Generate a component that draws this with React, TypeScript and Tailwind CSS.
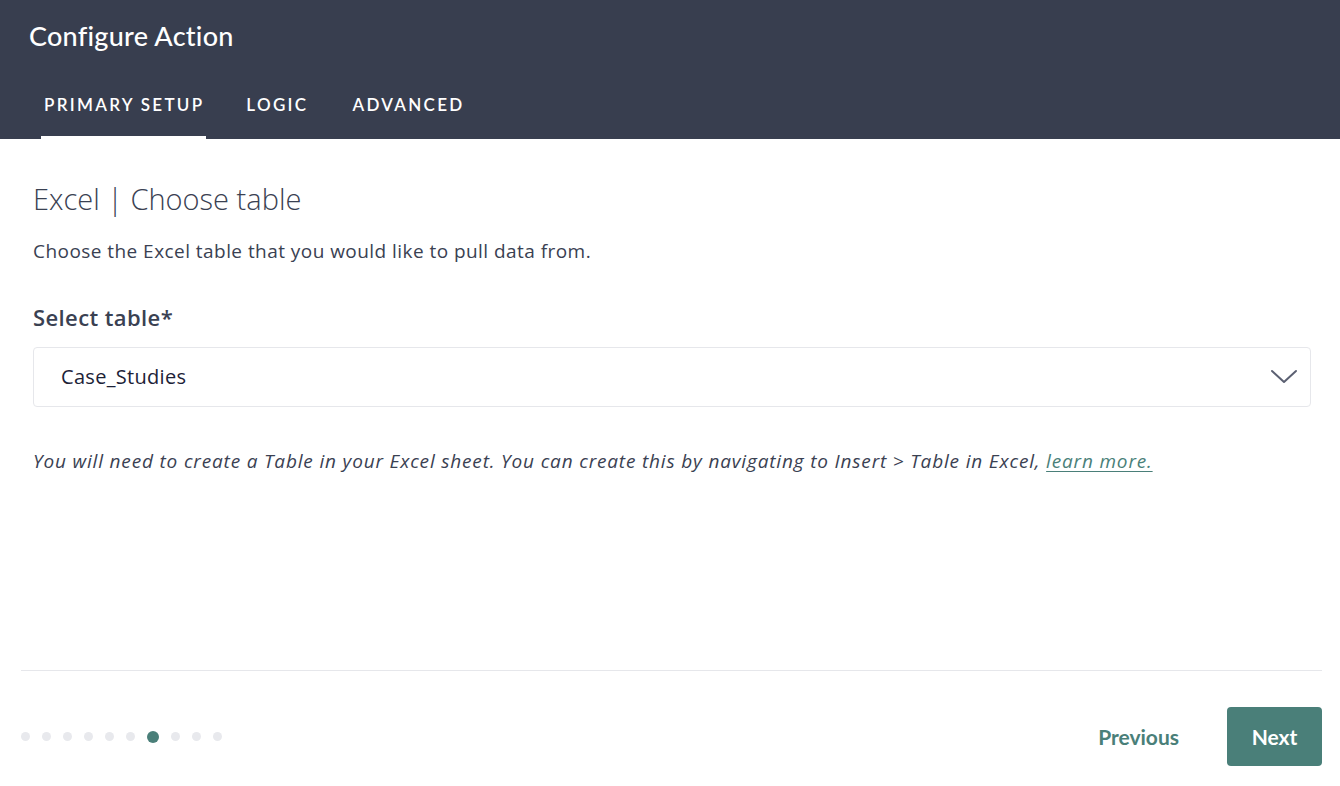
import React from "react";

const lato = { fontFamily: "Lato, 'Open Sans', sans-serif" };
const open = { fontFamily: "'Open Sans', sans-serif" };

export default function App() {
  const dots = [0, 1, 2, 3, 4, 5, 6, 7, 8, 9];
  return (
    <div className="w-[1340px] h-[786px] bg-white flex flex-col overflow-hidden" style={lato}>
      <div className="bg-[#383e4f] h-[139px] flex flex-col px-[29px]">
        <div className="pt-[19px] text-[27px] leading-[34px] text-white font-medium tracking-[0.25px]">Configure Action</div>
        <div className="mt-[40px] flex pl-[12px]">
          <div className="relative h-[46px] flex items-start">
            <span className="text-[17px] leading-[24px] font-semibold tracking-[2.3px] text-white pl-[3px] pr-[2px]">PRIMARY SETUP</span>
            <div className="absolute left-0 right-0 bottom-0 h-[3px] bg-white"></div>
          </div>
          <span className="ml-[40px] text-[17px] leading-[24px] font-semibold tracking-[2.3px] text-white">LOGIC</span>
          <span className="ml-[44px] text-[17px] leading-[24px] font-semibold tracking-[2.3px] text-white">ADVANCED</span>
        </div>
      </div>

      <div className="flex-1 flex flex-col px-[33px]">
        <div className="mt-[42px] text-[29px] leading-[36px] font-light text-[#3a4152]" style={open}>
          Excel | Choose table
        </div>
        <div className="mt-[21px] text-[19px] leading-[26px] font-normal tracking-[0.45px] text-[#3a4152]" style={open}>
          Choose the Excel table that you would like to pull data from.
        </div>
        <div className="mt-[39px] text-[22px] leading-[28px] font-semibold tracking-[0.4px] text-[#3a4152]" style={open}>
          Select table*
        </div>
        <div className="mt-[16px] h-[60px] w-[1278px] border border-[#e6e7eb] rounded-[4px] flex items-center justify-between pl-[27px] pr-[12px]">
          <span className="text-[20px] tracking-[0.3px] text-[#1c2237]" style={open}>Case_Studies</span>
          <svg width="28" height="16" viewBox="0 0 28 16" fill="none">
            <path d="M2 2 L14 13 L26 2" stroke="#5b6072" strokeWidth="2" strokeLinecap="round" strokeLinejoin="round" />
          </svg>
        </div>
        <div className="mt-[41px] text-[19px] leading-[26px] italic tracking-[0.83px] text-[#3a4152]" style={open}>
          You will need to create a Table in your Excel sheet. You can create this by navigating to Insert &gt; Table in Excel,{" "}
          <span className="text-[#4a7f79] underline underline-offset-[3px]">learn more.</span>
        </div>
      </div>

      <div className="ml-[21px] mr-[18px] h-[1px] bg-[#e6e7eb]"></div>
      <div className="h-[115px] flex items-start justify-between pl-[21px] pr-[18px] pt-[36px]">
        <div className="h-[59px] flex items-center gap-[12px]">
          {dots.map((d) =>
            d === 6 ? (
              <div key={d} className="w-[12px] h-[12px] rounded-full bg-[#4a7f79]"></div>
            ) : (
              <div key={d} className="w-[9px] h-[9px] rounded-full bg-[#e8e9ed]"></div>
            )
          )}
        </div>
        <div className="flex items-center gap-[48px]">
          <span className="text-[21px] font-bold text-[#4a7f79]">Previous</span>
          <button className="w-[95px] h-[59px] rounded-[4px] bg-[#4a7f79] text-white text-[21px] font-bold">Next</button>
        </div>
      </div>
    </div>
  );
}
